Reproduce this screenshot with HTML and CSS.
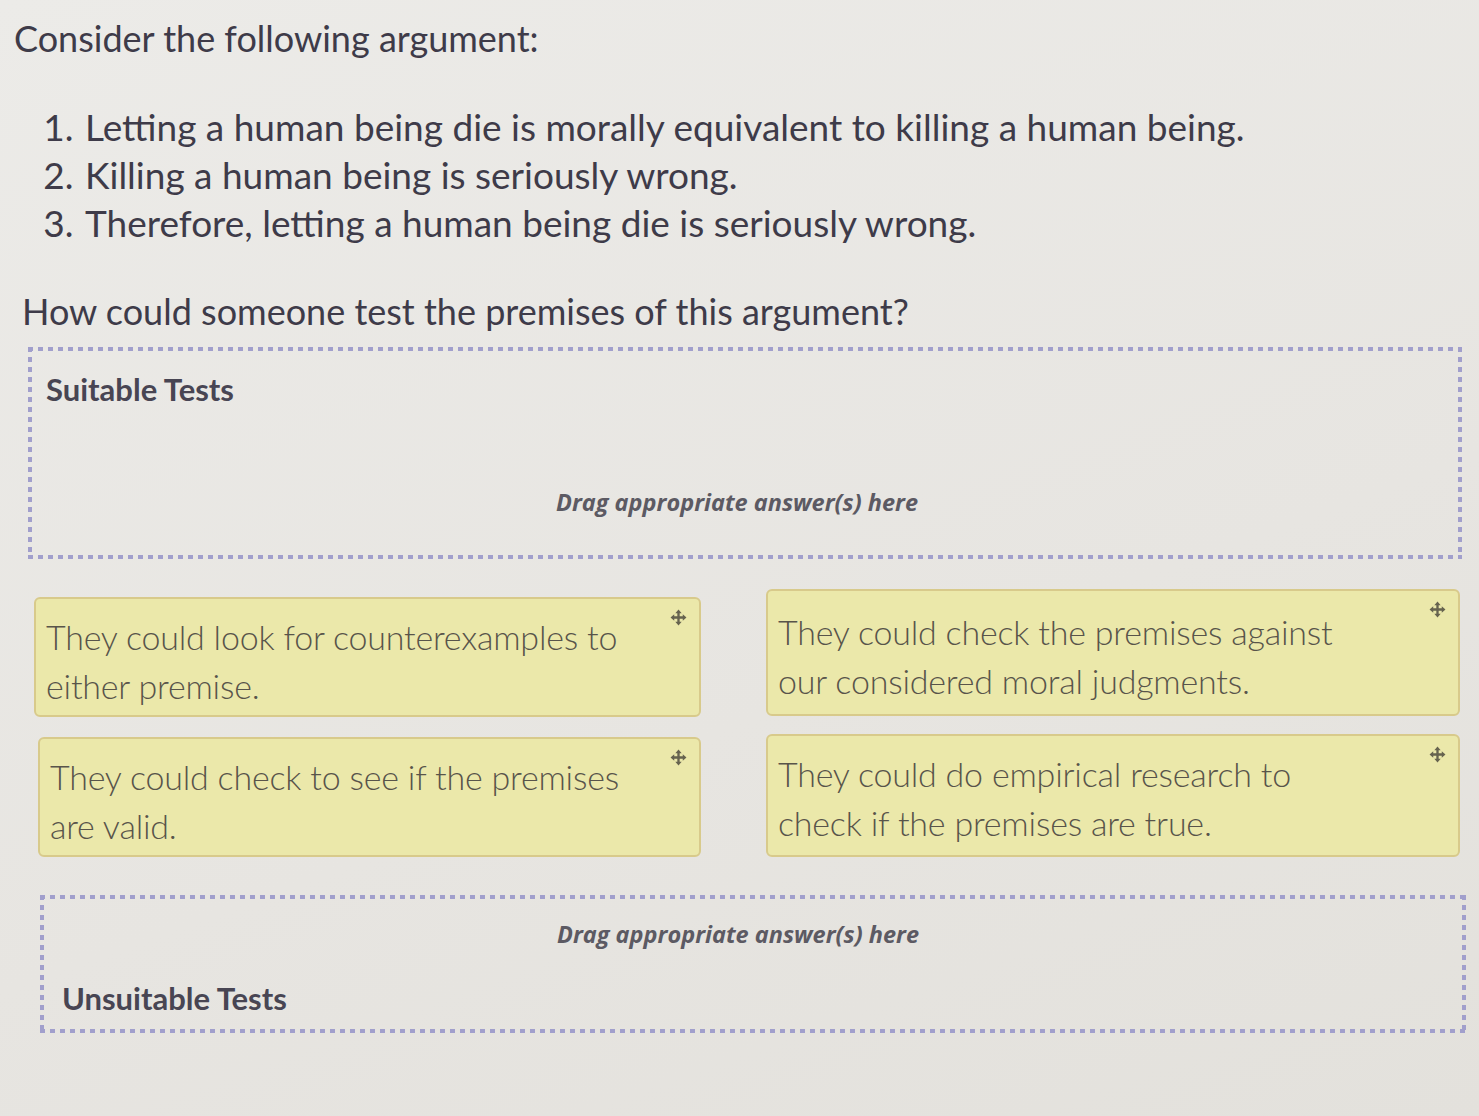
FILE: index.html
```html
<!DOCTYPE html>
<html>
<head>
<meta charset="utf-8">
<link rel="stylesheet" href="styles.css">
</head>
<body>
<div class="page">
  <h1 class="title">Consider the following argument:</h1>
  <ol class="premises">
    <li>Letting a human being die is morally equivalent to killing a human being.</li>
    <li>Killing a human being is seriously wrong.</li>
    <li>Therefore, letting a human being die is seriously wrong.</li>
  </ol>
  <p class="question">How could someone test the premises of this argument?</p>

  <div class="zone zone-top">
    <div class="zone-label">Suitable Tests</div>
    <div class="drag-hint">Drag appropriate answer(s) here</div>
  </div>

  <div class="cards">
    <div class="card c1"><span class="card-text">They could look for counterexamples to either premise.</span><svg class="move" viewBox="0 0 16 16"><path d="M8 0.5 L11 4 H9.1 V6.9 H12 V5 L15.5 8 L12 11 V9.1 H9.1 V12 H11 L8 15.5 L5 12 H6.9 V9.1 H4 V11 L0.5 8 L4 5 V6.9 H6.9 V4 H5 Z"/></svg></div>
    <div class="card c2"><span class="card-text">They could check the premises against our considered moral judgments.</span><svg class="move" viewBox="0 0 16 16"><path d="M8 0.5 L11 4 H9.1 V6.9 H12 V5 L15.5 8 L12 11 V9.1 H9.1 V12 H11 L8 15.5 L5 12 H6.9 V9.1 H4 V11 L0.5 8 L4 5 V6.9 H6.9 V4 H5 Z"/></svg></div>
    <div class="card c3"><span class="card-text">They could check to see if the premises are valid.</span><svg class="move" viewBox="0 0 16 16"><path d="M8 0.5 L11 4 H9.1 V6.9 H12 V5 L15.5 8 L12 11 V9.1 H9.1 V12 H11 L8 15.5 L5 12 H6.9 V9.1 H4 V11 L0.5 8 L4 5 V6.9 H6.9 V4 H5 Z"/></svg></div>
    <div class="card c4"><span class="card-text">They could do empirical research to check if the premises are true.</span><svg class="move" viewBox="0 0 16 16"><path d="M8 0.5 L11 4 H9.1 V6.9 H12 V5 L15.5 8 L12 11 V9.1 H9.1 V12 H11 L8 15.5 L5 12 H6.9 V9.1 H4 V11 L0.5 8 L4 5 V6.9 H6.9 V4 H5 Z"/></svg></div>
  </div>

  <div class="zone zone-bottom">
    <div class="drag-hint">Drag appropriate answer(s) here</div>
    <div class="zone-label">Unsuitable Tests</div>
  </div>
</div>
</body>
</html>
```
FILE: styles.css
```css
html, body {
  margin: 0;
  padding: 0;
  background: #e7e5e1;
}
.page {
  width: 1479px;
  height: 1116px;
  box-sizing: border-box;
  padding: 14px 12px 0 14px;
  font-family: Lato, "Open Sans", sans-serif;
  color: #3e3b49;
  overflow: hidden;
  background: linear-gradient(160deg, #ecebe8 0%, #e7e5e1 60%, #e3e1dc 100%);
}
.title {
  margin: 0;
  font-size: 36px;
  font-weight: 400;
  line-height: 48px;
}
.premises {
  margin: 41px 0 0 0;
  padding-left: 69px;
  font-size: 37px;
  line-height: 48px;
}
.premises li {
  padding-left: 2px;
}
.question {
  margin: 40px 0 0 8px;
  font-size: 36px;
  line-height: 48px;
}
.zone {
  display: flex;
  flex-direction: column;
  --dot: #a19fcc;
  background-image:
    repeating-linear-gradient(90deg, var(--dot) 0 5px, transparent 5px 10px),
    repeating-linear-gradient(90deg, var(--dot) 0 5px, transparent 5px 10px),
    repeating-linear-gradient(180deg, var(--dot) 0 5px, transparent 5px 10px),
    repeating-linear-gradient(180deg, var(--dot) 0 5px, transparent 5px 10px);
  background-size: 100% 4px, 100% 4px, 4px 100%, 4px 100%;
  background-position: left top, left bottom, left top, right top;
  background-repeat: no-repeat;
}
.zone-top {
  margin: 12px 0 0 14px;
  width: 1434px;
  height: 212px;
  box-sizing: border-box;
  padding: 23px 0 0 18px;
}
.zone-label {
  font-size: 31px;
  font-weight: 700;
  color: #484553;
  line-height: 38px;
}
.drag-hint {
  font-family: "Open Sans", sans-serif;
  font-style: italic;
  font-weight: 700;
  font-size: 23.5px;
  color: #5c5a63;
  text-align: center;
  line-height: 32px;
}
.zone-top .drag-hint {
  margin-top: 78px;
  padding-right: 34px;
}
.cards {
  display: grid;
  grid-template-columns: 667px 694px;
  column-gap: 65px;
  row-gap: 20px;
  margin: 38px 0 0 20px;
}
.card {
  position: relative;
  background: #ebe8aa;
  border: 2px solid #d8ca8b;
  border-radius: 6px;
  height: 120px;
  box-sizing: border-box;
  padding: 13px 60px 0 10px;
  font-family: Lato, sans-serif;
  font-weight: 300;
  font-size: 34px;
  letter-spacing: -0.2px;
  line-height: 49px;
  color: #58544a;
}
.c2, .c4 { padding-right: 90px; }
.c2 { margin-top: -8px; height: 127px; padding-top: 16px; }
.c3 { margin-left: 4px; }
.c4 { margin-top: -3px; height: 123px; }
.move {
  position: absolute;
  top: 10px;
  right: 12px;
  width: 17px;
  height: 17px;
  fill: #66634f;
}
.zone-bottom {
  margin: 38px 0 0 26px;
  width: 1426px;
  height: 138px;
  box-sizing: border-box;
  padding: 23px 0 0 22px;
}
.zone-bottom .drag-hint {
  padding-right: 52px;
}
.zone-bottom .zone-label {
  margin-top: 29px;
}
```
